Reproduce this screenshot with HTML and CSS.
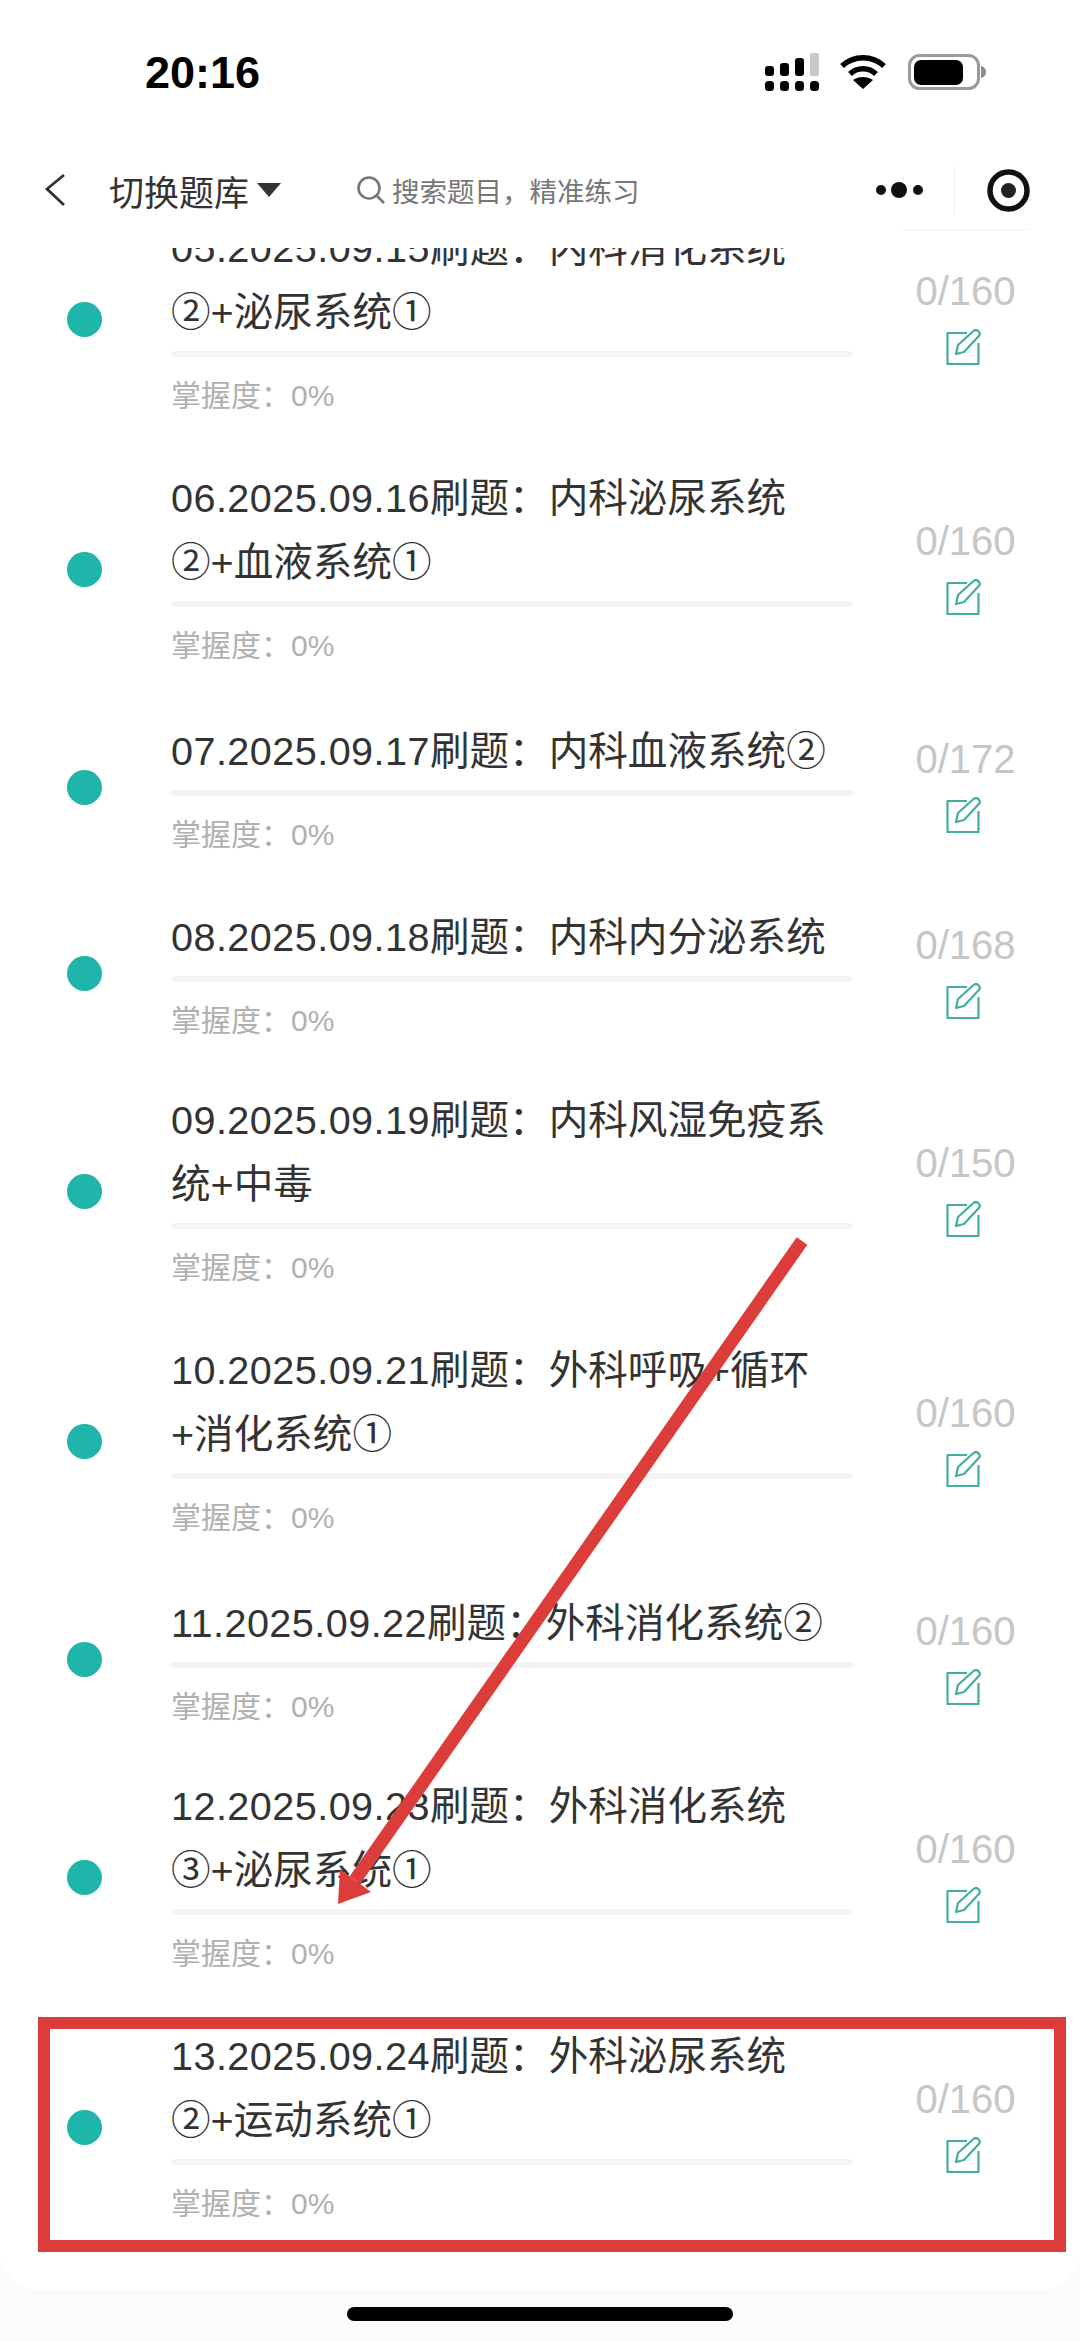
FILE: index.html
```html
<!DOCTYPE html>
<html lang="zh-CN">
<head>
<meta charset="utf-8">
<title>切换题库</title>
<link rel="stylesheet" href="styles.css">
</head>
<body>
<div class="screen">
  <header class="top">
    <div class="status">
      <span class="time">20:16</span>
      <div class="status-icons">
        <svg class="signal" width="54" height="40" viewBox="0 0 54 40" fill="#000">
          <rect x="0" y="13" width="9" height="10" rx="3"/><rect x="15" y="10" width="9" height="13" rx="3"/><rect x="30" y="5" width="9" height="18" rx="3"/><rect x="45" y="0" width="9" height="23" rx="2" fill="#c9c9c9"/>
          <rect x="0" y="28" width="9" height="10" rx="3.5"/><rect x="15" y="28" width="9" height="10" rx="3.5"/><rect x="30" y="28" width="9" height="10" rx="3.5"/><rect x="45" y="28" width="9" height="10" rx="3.5"/>
        </svg>
        <svg class="wifi" width="48" height="36" viewBox="0 0 48 36" fill="none" stroke="#000" stroke-width="5.5">
          <path d="M3 12C15 1 33 1 45 12"/><path d="M11 20C18 13 30 13 37 20"/><path d="M24 35L14 26C20 22 28 22 34 26Z" fill="#000" stroke="none"/>
        </svg>
        <svg class="battery" width="78" height="36" viewBox="0 0 78 36">
          <rect x="1.5" y="1.5" width="69" height="33" rx="10" fill="#fff" stroke="#9a9a9a" stroke-width="3"/>
          <rect x="6" y="6" width="49" height="25" rx="7" fill="#000"/>
          <path d="M73 12C77 13 78 16 78 18C78 20 77 23 73 24Z" fill="#8c8c8c"/>
        </svg>
      </div>
    </div>
    <nav class="nav">
      <svg class="back" width="22" height="34" viewBox="0 0 22 34" fill="none" stroke="#333" stroke-width="2.8"><path d="M20 2L3 16L20 32"/></svg>
      <span class="switch">切换题库</span>
      <span class="caret"></span>
      <svg class="search-icon" width="30" height="30" viewBox="0 0 30 30" fill="none" stroke="#777" stroke-width="2.6"><circle cx="13" cy="13" r="10.5"/><path d="M21 21L28 28"/></svg>
      <span class="search-text">搜索题目，精准练习</span>
      <div class="capsule">
        <svg class="more" width="48" height="16" viewBox="0 0 48 16" fill="#111"><circle cx="5" cy="8" r="5"/><circle cx="23" cy="8" r="8"/><circle cx="42" cy="8" r="5"/></svg>
        <span class="divider"></span>
        <svg class="target" width="43" height="43" viewBox="0 0 43 43"><circle cx="21.5" cy="21.5" r="18.5" fill="none" stroke="#111" stroke-width="5.5"/><circle cx="21.5" cy="21.5" r="7.5" fill="#222"/></svg>
      </div>
    </nav>
  </header>

  <main class="list">
    <article class="row"><span class="dot"></span><div class="main"><div class="title"><span class="num">05.2025.09.15</span>刷题：内科消化系统<br>②+泌尿系统①</div><div class="bar"></div><div class="mastery">掌握度：0%</div></div><div class="side"><span class="count">0/160</span><svg class="edit" viewBox="0 0 36 36"><use href="#edit-icon"/></svg></div></article>
    <article class="row"><span class="dot"></span><div class="main"><div class="title"><span class="num">06.2025.09.16</span>刷题：内科泌尿系统<br>②+血液系统①</div><div class="bar"></div><div class="mastery">掌握度：0%</div></div><div class="side"><span class="count">0/160</span><svg class="edit" viewBox="0 0 36 36"><use href="#edit-icon"/></svg></div></article>
    <article class="row single"><span class="dot"></span><div class="main"><div class="title"><span class="num">07.2025.09.17</span>刷题：内科血液系统②</div><div class="bar"></div><div class="mastery">掌握度：0%</div></div><div class="side"><span class="count">0/172</span><svg class="edit" viewBox="0 0 36 36"><use href="#edit-icon"/></svg></div></article>
    <article class="row single"><span class="dot"></span><div class="main"><div class="title"><span class="num">08.2025.09.18</span>刷题：内科内分泌系统</div><div class="bar"></div><div class="mastery">掌握度：0%</div></div><div class="side"><span class="count">0/168</span><svg class="edit" viewBox="0 0 36 36"><use href="#edit-icon"/></svg></div></article>
    <article class="row"><span class="dot"></span><div class="main"><div class="title"><span class="num">09.2025.09.19</span>刷题：内科风湿免疫系<br>统+中毒</div><div class="bar"></div><div class="mastery">掌握度：0%</div></div><div class="side"><span class="count">0/150</span><svg class="edit" viewBox="0 0 36 36"><use href="#edit-icon"/></svg></div></article>
    <article class="row"><span class="dot"></span><div class="main"><div class="title"><span class="num">10.2025.09.21</span>刷题：外科呼吸+循环<br>+消化系统①</div><div class="bar"></div><div class="mastery">掌握度：0%</div></div><div class="side"><span class="count">0/160</span><svg class="edit" viewBox="0 0 36 36"><use href="#edit-icon"/></svg></div></article>
    <article class="row single"><span class="dot"></span><div class="main"><div class="title"><span class="num">11.2025.09.22</span>刷题：外科消化系统②</div><div class="bar"></div><div class="mastery">掌握度：0%</div></div><div class="side"><span class="count">0/160</span><svg class="edit" viewBox="0 0 36 36"><use href="#edit-icon"/></svg></div></article>
    <article class="row"><span class="dot"></span><div class="main"><div class="title"><span class="num">12.2025.09.23</span>刷题：外科消化系统<br>③+泌尿系统①</div><div class="bar"></div><div class="mastery">掌握度：0%</div></div><div class="side"><span class="count">0/160</span><svg class="edit" viewBox="0 0 36 36"><use href="#edit-icon"/></svg></div></article>
    <article class="row"><span class="dot"></span><div class="main"><div class="title"><span class="num">13.2025.09.24</span>刷题：外科泌尿系统<br>②+运动系统①</div><div class="bar"></div><div class="mastery">掌握度：0%</div></div><div class="side"><span class="count">0/160</span><svg class="edit" viewBox="0 0 36 36"><use href="#edit-icon"/></svg></div></article>
  </main>

  <footer class="bottom"><div class="card-end"></div><span class="home"></span></footer>

  <svg class="markup" width="1080" height="2341" viewBox="0 0 1080 2341">
    <path d="M802 1241L355 1880" fill="none" stroke="#dc3d3a" stroke-width="13"/>
    <path d="M338 1904L340 1869L371 1892Z" fill="#dc3d3a"/>
    <rect x="44" y="2023" width="1016" height="223" fill="none" stroke="#dc3d3a" stroke-width="12"/>
  </svg>

  <svg class="defs" width="0" height="0">
    <symbol id="edit-icon" viewBox="0 0 36 36">
      <path d="M22 4H2.5V35H33.5V14" fill="none" stroke="#43ad9f" stroke-width="2.2" stroke-linejoin="round"/>
      <path d="M11 25L13 16L28.5 2C30 .8 32 .8 33.5 2.2C35 3.8 35 5.8 33.8 7L19 23Z" fill="none" stroke="#43ad9f" stroke-width="2.2" stroke-linejoin="round"/>
    </symbol>
  </svg>
</div>
</body>
</html>
```
FILE: styles.css
```css
* { box-sizing: border-box; }
html, body { margin: 0; padding: 0; }
body { background: #fcfcfc; font-family: "Liberation Sans", "Noto Sans CJK SC", sans-serif; }
.screen { position: relative; width: 1080px; height: 2341px; overflow: hidden; display: flex; flex-direction: column; background: #fcfcfc; }

.top { position: relative; z-index: 2; height: 248px; flex: none; background: #fff; }
.status { height: 152px; display: flex; justify-content: space-between; align-items: flex-start; padding: 48px 94px 0 145px; }
.time { font-size: 45px; font-weight: 700; line-height: 50px; color: #000; }
.status-icons { display: flex; align-items: flex-start; gap: 20px; }
.signal { margin-top: 5px; }
.wifi { margin-top: 6px; margin-right: 1px; }
.battery { margin-top: 6px; }

.nav { height: 76px; display: flex; align-items: center; padding-left: 44px; }
.switch { margin-left: 43px; font-size: 35px; color: #333; }
.caret { margin-left: 8px; width: 0; height: 0; border-left: 12px solid transparent; border-right: 12px solid transparent; border-top: 14px solid #333; }
.search-icon { margin-left: 75px; }
.search-text { margin-left: 6px; font-size: 27.5px; color: #777; }
.capsule { margin-left: auto; display: flex; align-items: center; margin-right: 50px; position: relative; }
.capsule::after { content: ""; position: absolute; left: 26px; right: 0; top: 62px; height: 1px; background: #f4f4f4; }
.more { margin-right: 30px; }
.divider { width: 1px; height: 47px; background: #f2f2f2; margin-right: 32px; }

.list { flex: none; height: 2058px; margin-top: -54px; background: #fff; position: relative; z-index: 1; }
.row { display: flex; align-items: center; padding-left: 67px; }
.dot { width: 35px; height: 35px; border-radius: 50%; background: #1fb5aa; flex: none; }
.main { width: 682px; margin-left: 69px; padding: 22px 0 30px; flex: none; }
.single .main { padding: 25px 0 27px; }
.title { font-size: 39.6px; line-height: 64px; color: #333; white-space: nowrap; }
.num { letter-spacing: .45px; }
.bar { height: 6px; margin-top: 7px; background: #f4f4f4; border-radius: 3px; }
.mastery { margin-top: 21px; font-size: 30px; line-height: 36px; color: #b0b0b0; white-space: nowrap; }
.side { margin-left: 62px; margin-bottom: 6px; width: 101px; flex: none; display: flex; flex-direction: column; align-items: center; }
.count { font-size: 40px; line-height: 46px; color: #c6c6c6; }
.edit { display: block; width: 36px; height: 36px; margin-top: 15px; margin-right: 5px; }

.bottom { flex: 1; display: flex; flex-direction: column; position: relative; }
.card-end { height: 38px; background: #fff; border-radius: 0 0 44px 44px; box-shadow: 0 6px 12px rgba(0,0,0,.012); }
.home { align-self: center; width: 386px; height: 14px; margin-top: 17px; border-radius: 7px; background: #000; }

.markup { position: absolute; left: 0; top: 0; z-index: 4; pointer-events: none; }
.defs { position: absolute; }
```
